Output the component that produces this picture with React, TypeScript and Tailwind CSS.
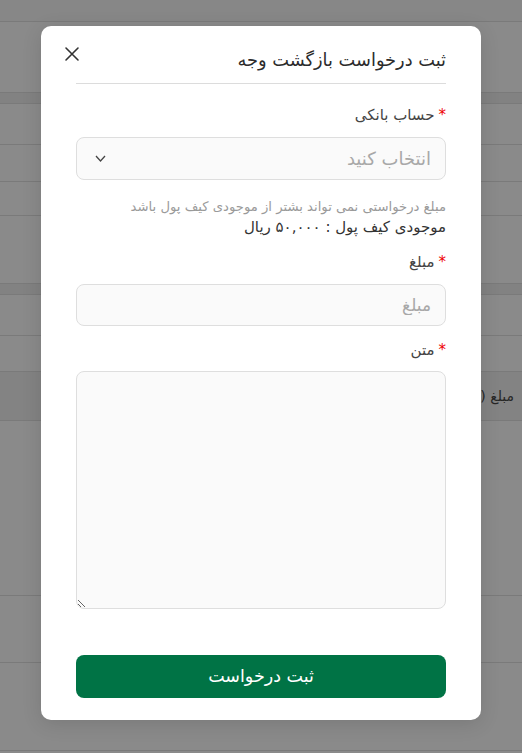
import React from 'react';

const BgRow: React.FC<{ h: string; className?: string; children?: React.ReactNode }> = ({ h, className = '', children }) => (
  <div className={`${h} ${className} border-b border-[#7a7a7a]`}>{children}</div>
);

const Star = () => <span className="text-[#e00] ml-1">*</span>;

const App: React.FC = () => {
  return (
    <div dir="rtl" className="relative w-[522px] h-[753px] overflow-hidden bg-[#8a8a8a] font-['DejaVu_Sans',sans-serif]">
      {/* page under the overlay */}
      <div className="flex flex-col">
        <BgRow h="h-[22px]" className="bg-[#878787]" />
        <div className="h-[70px]" />
        <BgRow h="h-[12px]" className="bg-[#828282] border-t border-t-[#7a7a7a]" />
        <BgRow h="h-[41px]" />
        <BgRow h="h-[37px]" />
        <BgRow h="h-[34px]" />
        <div className="h-[67px]" />
        <BgRow h="h-[12px]" className="bg-[#828282] border-t border-t-[#7a7a7a]" />
        <BgRow h="h-[41px]" />
        <div className="h-[35px]" />
        <BgRow h="h-[50px]" className="bg-[#838383] border-t border-t-[#7a7a7a] flex items-center pr-2 text-[14px] text-[#262626]">
          مبلغ (
        </BgRow>
        <BgRow h="h-[175px]" />
        <BgRow h="h-[67px]" />
        <BgRow h="h-[88px]" />
      </div>

      {/* modal */}
      <div className="absolute left-[41px] top-[26px] w-[440px] h-[694px] bg-white rounded-[10px] shadow-[0_4px_20px_rgba(0,0,0,0.12)] px-[35px] pt-[21px] pb-[22px] flex flex-col">
        <button className="absolute left-[23px] top-[20px] text-[#333]">
          <svg width="16" height="16" viewBox="0 0 16 16" fill="none" stroke="currentColor" strokeWidth="1.6" strokeLinecap="round">
            <path d="M2 2 L14 14 M14 2 L2 14" />
          </svg>
        </button>
        <div className="border-b border-[#dcdcdc] pb-[10px]">
          <h2 className="text-[17.8px] leading-[26px] text-[#2b2b2b]">ثبت درخواست بازگشت وجه</h2>
        </div>

        <label className="mt-[20px] text-[15px] leading-[22px] text-[#444]">
          <Star />
          حساب بانکی
        </label>
        <div className="mt-[11px] h-[43px] rounded-[8px] border border-[#dedede] bg-[#fafafa] flex items-center justify-between pr-[14px] pl-[18px]">
          <span className="text-[18px] text-[#a8a8a8]">انتخاب کنید</span>
          <svg width="11" height="7" viewBox="0 0 11 7" fill="none" stroke="#444" strokeWidth="1.3">
            <path d="M1 1 L5.5 6 L10 1" />
          </svg>
        </div>

        <p className="mt-[18px] text-[13.2px] leading-[18px] text-[#9a9a9a]">مبلغ درخواستی نمی تواند بشتر از موجودی کیف پول باشد</p>
        <p className="text-[15px] leading-[22px] text-[#333]">موجودی کیف پول : ۵۰,۰۰۰ ریال</p>

        <label className="mt-[13px] text-[15px] leading-[22px] text-[#444]">
          <Star />
          مبلغ
        </label>
        <input
          className="mt-[11px] h-[42px] rounded-[8px] border border-[#dedede] bg-[#fafafa] px-[14px] text-[17px] outline-none placeholder:text-[#a8a8a8]"
          placeholder="مبلغ"
        />

        <label className="mt-[13px] text-[15px] leading-[22px] text-[#444]">
          <Star />
          متن
        </label>
        <textarea className="mt-[10px] h-[238px] rounded-[8px] border border-[#dedede] bg-[#fafafa] p-3 text-[14px] outline-none" />

        <button className="mt-auto h-[43px] rounded-[8px] bg-[#007345] text-white text-[17.5px]">ثبت درخواست</button>
      </div>
    </div>
  );
};

export default App;
